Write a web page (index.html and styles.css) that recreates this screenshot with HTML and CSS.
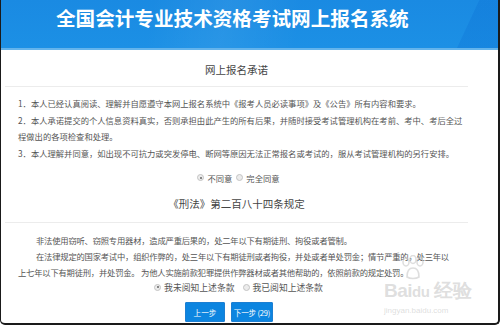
FILE: index.html
```html
<!DOCTYPE html>
<html lang="zh">
<head>
<meta charset="utf-8">
<title>全国会计专业技术资格考试网上报名系统</title>
<link rel="stylesheet" href="styles.css">
</head>
<body>
<div class="frame">
  <header class="banner">
    <h1 class="banner-title">全国会计专业技术资格考试网上报名系统</h1>
  </header>
  <main class="content">
    <h2 class="section-title">网上报名承诺</h2>
    <div class="para">
      <p class="line">1．本人已经认真阅读、理解并自愿遵守本网上报名系统中《报考人员必读事项》及《公告》所有内容和要求。</p>
      <p class="line">2．本人承诺提交的个人信息资料真实，否则承担由此产生的所有后果，并随时接受考试管理机构在考前、考中、考后全过<br>程做出的各项检查和处理。</p>
      <p class="line">3．本人理解并同意，如出现不可抗力或突发停电、断网等原因无法正常报名或考试的，服从考试管理机构的另行安排。</p>
    </div>
    <div class="choices">
      <label class="choice"><span class="radio checked"></span>不同意</label>
      <label class="choice"><span class="radio"></span>完全同意</label>
    </div>
    <h2 class="section-title law">《刑法》第二百八十四条规定</h2>
    <div class="para law-text">
      <p class="line indent">非法使用窃听、窃照专用器材，造成严重后果的，处二年以下有期徒刑、拘役或者管制。</p>
      <p class="line indent">在法律规定的国家考试中，组织作弊的，处三年以下有期徒刑或者拘役，并处或者单处罚金；情节严重的，处三年以<br>上七年以下有期徒刑，并处罚金。 为他人实施前款犯罪提供作弊器材或者其他帮助的，依照前款的规定处罚。</p>
    </div>
    <div class="choices choices-2">
      <label class="choice"><span class="radio checked"></span>我未阅知上述条款</label>
      <label class="choice"><span class="radio"></span>我已阅知上述条款</label>
    </div>
    <div class="buttons">
      <button class="btn">上一步</button>
      <button class="btn btn-next">下一步 (29)</button>
    </div>
  </main>
  <div class="watermark">
    <svg class="wm-paw" width="30" height="26" viewBox="0 0 30 26" aria-hidden="true">
      <g fill="none" stroke="rgba(200,200,200,0.6)" stroke-width="1.6">
        <ellipse cx="8" cy="7" rx="3" ry="4"/>
        <ellipse cx="15" cy="4.5" rx="3" ry="4"/>
        <ellipse cx="22" cy="7" rx="3" ry="4"/>
        <path d="M9 22 C9 15 12 13 15 13 C18 13 21 15 21 22 C18 24 12 24 9 22 Z"/>
      </g>
    </svg>
    <div class="wm-logo">Bai<span class="wm-du">du</span> 经验</div>
    <div class="wm-url">jingyan.baidu.com</div>
  </div>
</div>
</body>
</html>
```
FILE: styles.css
```css
* { box-sizing: border-box; }
html, body {
  margin: 0;
  padding: 0;
  background: #fff;
}
body {
  width: 500px;
  height: 325px;
  overflow: hidden;
  font-family: "Noto Sans CJK SC", "Noto Sans", sans-serif;
  color: #555;
}
.frame {
  position: relative;
  width: 500px;
  height: 325px;
  border-left: 1px solid #1a1a1a;
  border-right: 2px solid #1a1a1a;
  border-bottom: 2px solid #1a1a1a;
  border-radius: 0 0 5px 5px;
  overflow: hidden;
  background: #fff;
}
.banner {
  height: 50px;
  background:
    linear-gradient(115deg, rgba(255,255,255,0) 0%, rgba(255,255,255,0) 92%, rgba(0,90,200,0.18) 92.2%),
    linear-gradient(100deg, rgba(255,255,255,0) 30%, rgba(255,255,255,0.06) 45%, rgba(255,255,255,0) 60%),
    linear-gradient(180deg, #1a8ae2 0%, #1c90e5 100%);
  border-bottom: 2px solid #64b4ec;
  display: flex;
  align-items: flex-start;
}
.banner-title {
  margin: 7px 0 0 55px;
  font-size: 19.6px;
  line-height: 22px;
  font-weight: 700;
  color: #fff;
  white-space: nowrap;
}
.content {
  margin-left: 4px;
  width: 463px;
}
.section-title {
  margin: 0;
  padding-top: 4px;
  height: 37px;
  line-height: 32px;
  font-size: 10.5px;
  font-weight: 400;
  color: #444;
  text-align: center;
  border-bottom: 1px solid #ececec;
}
.section-title.law {
  padding-top: 0;
  height: 37px;
  line-height: 36px;
  font-size: 10.5px;
}
.para {
  padding: 8px 0 0 13px;
  font-size: 8.3px;
  line-height: 16.7px;
  color: #555;
}
.line { margin: 0; white-space: nowrap; }
.law-text {
  padding-top: 9px;
  line-height: 16.2px;
  letter-spacing: -0.2px;
}
.indent { text-indent: 18px; }
.choices {
  display: flex;
  justify-content: center;
  gap: 4px;
  margin-top: 8px;
  height: 16px;
  align-items: center;
  font-size: 8.3px;
  color: #555;
  padding-left: 4px;
}
.choices-2 {
  margin-top: 0;
  height: 14px;
  gap: 8px;
  font-size: 8.8px;
}
.choice {
  display: flex;
  align-items: center;
  gap: 3px;
}
.radio {
  width: 7px;
  height: 7px;
  border-radius: 50%;
  border: 1px solid #c4c4c4;
  background: #ececec;
  position: relative;
}
.radio.checked::after {
  content: "";
  position: absolute;
  left: 1.5px;
  top: 1.5px;
  width: 2px;
  height: 2px;
  border-radius: 50%;
  background: #666;
}
.buttons {
  display: flex;
  gap: 6px;
  margin: 8px 0 0 180px;
}
.btn {
  height: 20px;
  width: 40px;
  padding: 0;
  border: 1px solid #1d7fd2;
  background: #0c85e0;
  color: #fff;
  font-family: "Noto Sans CJK SC", "Noto Sans", sans-serif;
  font-size: 7.6px;
  white-space: nowrap;
  border-radius: 1px;
}
.btn-next { width: 42px; letter-spacing: -0.2px; }
.watermark {
  position: absolute;
  left: 383px;
  top: 255px;
  color: rgba(195,195,195,0.55);
  pointer-events: none;
}
.wm-paw {
  display: block;
  margin-left: 14px;
}
.wm-logo {
  font-family: "Liberation Sans", sans-serif;
  font-size: 19px;
  font-weight: 700;
  line-height: 20px;
  letter-spacing: -0.5px;
  white-space: nowrap;
}
.wm-du { font-size: 15px; }
.wm-url {
  font-family: "Liberation Sans", sans-serif;
  font-size: 8px;
  margin-top: 4px;
}
```
